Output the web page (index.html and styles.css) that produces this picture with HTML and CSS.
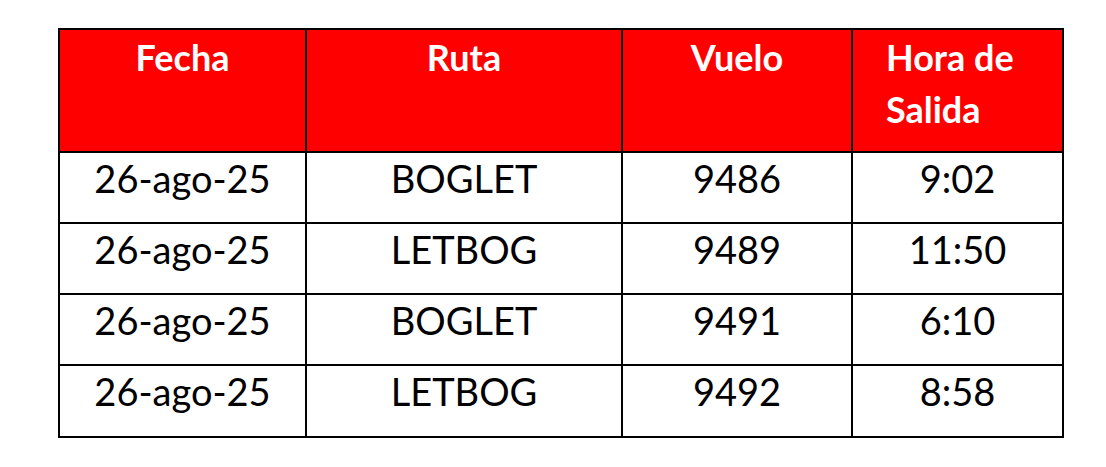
FILE: index.html
```html
<!DOCTYPE html>
<html lang="es">
<head>
<meta charset="utf-8">
<title>Vuelos</title>
<link rel="stylesheet" href="styles.css">
</head>
<body>
<table class="flights">
  <colgroup>
    <col class="c1"><col class="c2"><col class="c3"><col class="c4">
  </colgroup>
  <thead>
    <tr>
      <th>Fecha</th>
      <th>Ruta</th>
      <th>Vuelo</th>
      <th class="left">Hora de<br>Salida</th>
    </tr>
  </thead>
  <tbody>
    <tr><td>26-ago-25</td><td>BOGLET</td><td>9486</td><td>9:02</td></tr>
    <tr><td>26-ago-25</td><td>LETBOG</td><td>9489</td><td>11:50</td></tr>
    <tr><td>26-ago-25</td><td>BOGLET</td><td>9491</td><td>6:10</td></tr>
    <tr class="last"><td>26-ago-25</td><td>LETBOG</td><td>9492</td><td>8:58</td></tr>
  </tbody>
</table>
</body>
</html>
```

FILE: styles.css
```css
html, body {
  margin: 0;
  padding: 0;
  background: #ffffff;
}

body {
  padding: 28px 0 0 58px;
  font-family: Lato, "Open Sans", sans-serif;
}

.flights {
  border-collapse: collapse;
  table-layout: fixed;
  width: 1006px;
}

.c1 { width: 247px; }
.c2 { width: 316px; }
.c3 { width: 230px; }
.c4 { width: 211px; }

.flights th,
.flights td {
  border: 2px solid #000000;
  text-align: center;
  vertical-align: top;
  padding: 0;
}

.flights th {
  background: #ff0000;
  color: #ffffff;
  font-weight: 700;
  font-size: 36px;
  line-height: 52px;
  height: 123px;
  padding-top: 1px;
  box-sizing: border-box;
}

.flights th.left {
  text-align: left;
  padding-left: 33px;
}

.flights td {
  color: #000000;
  font-weight: 400;
  font-size: 38px;
  line-height: 48px;
  height: 71px;
  box-sizing: border-box;
  padding-top: 1px;
}

.flights tr.last td {
  height: 72px;
}
```
